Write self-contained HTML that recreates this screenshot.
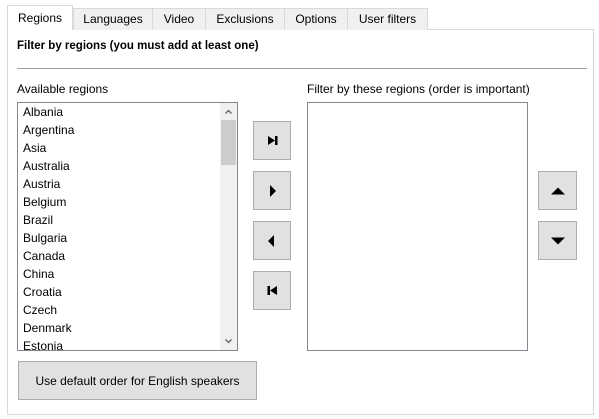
<!DOCTYPE html>
<html><head><meta charset="utf-8"><style>
*{box-sizing:border-box;margin:0;padding:0}
body{width:599px;height:419px;background:#fff;font-family:"Liberation Sans",sans-serif;font-size:12px;color:#000;position:relative;overflow:hidden}
.a{position:absolute}
.tab{position:absolute;top:8px;height:22px;background:#f0f0f0;border:1px solid #d9d9d9;border-bottom:none;text-align:center;line-height:20px}
.panel{left:7px;top:29px;width:587px;height:386px;border:1px solid #d9d9d9;background:#fff}
.btn{position:absolute;background:#e1e1e1;border:1px solid #adadad;display:flex;align-items:center;justify-content:center}
.list{border:1px solid #828790;background:#fff;overflow:hidden}
.item{height:18px;line-height:18px;padding-left:5px}
</style></head><body>
<div class="a panel"></div>
<div class="tab" style="left:73px;width:80px">Languages</div>
<div class="tab" style="left:152px;width:54px">Video</div>
<div class="tab" style="left:205px;width:80px">Exclusions</div>
<div class="tab" style="left:284px;width:64px">Options</div>
<div class="tab" style="left:347px;width:81px">User filters</div>
<div class="tab" style="left:7px;top:5px;width:66px;height:25px;background:#fff;line-height:24px">Regions</div>
<div class="a" style="left:17px;top:40px;font-weight:bold;font-size:11.5px">Filter by regions (you must add at least one)</div>
<div class="a" style="left:17px;top:68px;width:570px;height:1px;background:#a0a0a0"></div>
<div class="a" style="left:17px;top:82px">Available regions</div>
<div class="a" style="left:307px;top:82px">Filter by these regions (order is important)</div>
<div class="a list" style="left:17px;top:102px;width:221px;height:249px">
<div>
<div class="item">Albania</div><div class="item">Argentina</div><div class="item">Asia</div><div class="item">Australia</div><div class="item">Austria</div><div class="item">Belgium</div><div class="item">Brazil</div><div class="item">Bulgaria</div><div class="item">Canada</div><div class="item">China</div><div class="item">Croatia</div><div class="item">Czech</div><div class="item">Denmark</div><div class="item">Estonia</div>
</div>
<div class="a" style="left:202px;top:0;width:17px;height:247px;background:#f0f0f0"></div>
<div class="a" style="left:203px;top:17px;width:15px;height:45px;background:#cdcdcd"></div>
<svg class="a" style="left:202px;top:0" width="17" height="247"><path d="M5.5 10.5 L8.5 7.5 L11.5 10.5" fill="none" stroke="#606060" stroke-width="1.3"/><path d="M5.5 236.5 L8.5 239.5 L11.5 236.5" fill="none" stroke="#606060" stroke-width="1.3"/></svg>
</div>
<div class="a list" style="left:307px;top:102px;width:221px;height:249px"></div>
<div class="btn" style="left:253px;top:121px;width:38px;height:39px"><svg width="11" height="11"><path d="M1 1L8 5.5L1 10Z" fill="#000"/><rect x="8" y="1" width="2.5" height="9" fill="#000"/></svg></div>
<div class="btn" style="left:253px;top:171px;width:38px;height:39px"><svg width="10" height="14"><path d="M3 1L9 7L3 13Z" fill="#000"/></svg></div>
<div class="btn" style="left:253px;top:221px;width:38px;height:39px"><svg width="10" height="14"><path d="M7 1L1 7L7 13Z" fill="#000"/></svg></div>
<div class="btn" style="left:253px;top:271px;width:38px;height:39px"><svg width="11" height="11"><path d="M10 1L3 5.5L10 10Z" fill="#000"/><rect x="0.5" y="1" width="2.5" height="9" fill="#000"/></svg></div>
<div class="btn" style="left:538px;top:171px;width:39px;height:39px"><svg width="14" height="8"><path d="M0 7.5L7 0.5L14 7.5Z" fill="#000"/></svg></div>
<div class="btn" style="left:538px;top:221px;width:39px;height:39px"><svg width="14" height="8"><path d="M0 0.5L7 7.5L14 0.5Z" fill="#000"/></svg></div>
<div class="btn" style="left:18px;top:361px;width:239px;height:39px">Use default order for English speakers</div>
</body></html>
